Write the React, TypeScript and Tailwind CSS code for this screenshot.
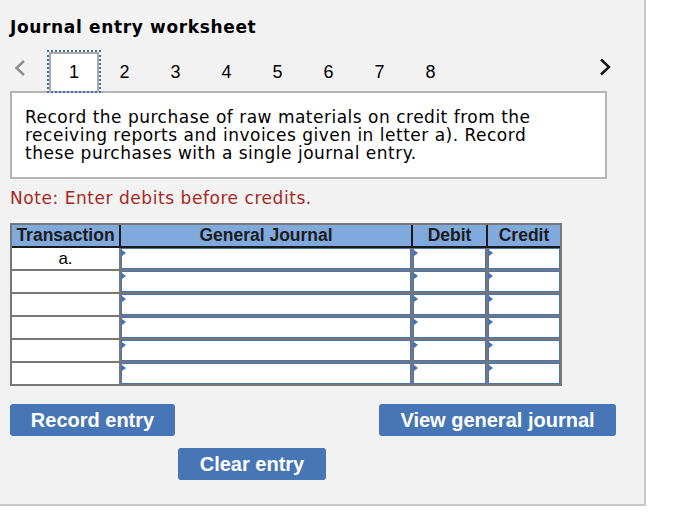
const verdana = { fontFamily: '"DejaVu Sans", Verdana, sans-serif' }
const arial = { fontFamily: '"Liberation Sans", Arial, sans-serif' }

function Marker() {
  return (
    <span className="absolute left-0 top-[1px] w-0 h-0 border-y-[3px] border-y-transparent border-l-[4px] border-l-[#3f73bb]" />
  )
}

function InputCell() {
  return (
    <div className="relative h-[21px] bg-white border border-[#4a74b4]">
      <Marker />
    </div>
  )
}

const rows = ['a.', '', '', '', '', '']

export default function App() {
  return (
    <div className="w-[700px] h-[528px] bg-white">
      <div className="w-[646px] h-[506px] bg-[#f2f2f2] border-r-2 border-b-2 border-[#c8c8c8] pl-[10px]">
        <h1 className="pt-[17px] text-[17px] leading-[20px] tracking-[0.65px] font-bold text-black" style={verdana}>
          Journal entry worksheet
        </h1>

        <div className="relative z-10 mt-[15px] h-[39px] flex items-start">
          <svg width="12" height="16" viewBox="0 0 12 16" className="mt-[8px] ml-[4px]">
            <polyline points="10,1 2.5,8 10,15" fill="none" stroke="#8c8c8c" strokeWidth="2.4" />
          </svg>
          <div className="ml-[23px] flex" style={arial}>
            {[1, 2, 3, 4, 5, 6, 7, 8].map((n) =>
              n === 1 ? (
                <div
                  key={n}
                  className="w-[50px] h-[39px] bg-white border-2 border-b-0 border-[#ababab] outline-2 outline-dotted outline-[#3f6fb0] flex items-center justify-center text-[18px] text-black"
                >
                  {n}
                </div>
              ) : (
                <div key={n} className="w-[51px] h-[39px] pt-[2px] flex items-center justify-center text-[18px] text-black">
                  {n}
                </div>
              )
            )}
          </div>
          <svg width="12" height="18" viewBox="0 0 12 18" className="ml-auto mr-[33px] mt-[6px]">
            <polyline points="2,1.5 10,9 2,16.5" fill="none" stroke="#111111" strokeWidth="2.4" />
          </svg>
        </div>

        <div
          className="w-[597px] h-[88px] bg-white border-2 border-[#b5b5b5] px-[13px] pt-[15px] text-[17px] leading-[18px] tracking-[0.5px] text-black"
          style={verdana}
        >
          Record the purchase of raw materials on credit from the
          <br />
          receiving reports and invoices given in letter a). Record
          <br />
          these purchases with a single journal entry.
        </div>

        <p className="mt-[9px] text-[17px] leading-[20px] tracking-[0.55px] text-[#a6271f]" style={verdana}>
          Note: Enter debits before credits.
        </p>

        <div className="mt-[15px] w-[552px] border-2 border-[#777777] bg-[#777777]" style={arial}>
          <div className="grid grid-cols-[107px_290px_73px_72px] gap-x-[2px] bg-[#1a1a1a] border-b-2 border-[#1a1a1a]">
            {['Transaction', 'General Journal', 'Debit', 'Credit'].map((h) => (
              <div key={h} className="h-[21px] bg-[#80a9de] flex items-center justify-center text-[17.5px] font-bold text-[#1c1c1c]">
                {h}
              </div>
            ))}
          </div>
          <div className="flex flex-col gap-y-[2px]">
            {rows.map((t, i) => (
              <div key={i} className="grid grid-cols-[107px_290px_73px_72px] gap-x-[2px]">
                <div className="h-[21px] bg-white flex items-center justify-center text-[17px] text-black">{t}</div>
                <InputCell />
                <InputCell />
                <InputCell />
              </div>
            ))}
          </div>
        </div>

        <div className="mt-[18px] w-[606px] flex justify-between" style={arial}>
          <button className="w-[165px] h-[32px] rounded-[3px] bg-[#4676b5] text-white text-[20px] font-bold">
            Record entry
          </button>
          <button className="w-[237px] h-[32px] rounded-[3px] bg-[#4676b5] text-white text-[20px] font-bold">
            View general journal
          </button>
        </div>
        <div className="mt-[12px] pl-[168px]" style={arial}>
          <button className="w-[148px] h-[32px] rounded-[3px] bg-[#4676b5] text-white text-[20px] font-bold">
            Clear entry
          </button>
        </div>
      </div>
    </div>
  )
}
